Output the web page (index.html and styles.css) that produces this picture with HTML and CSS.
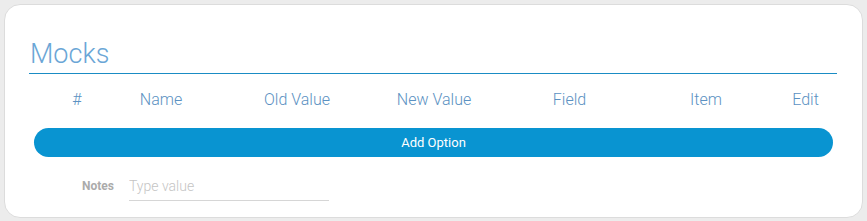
FILE: index.html
```html
<!DOCTYPE html>
<html lang="en">

<head>
    <meta charset="UTF-8">
    <meta name="viewport" content="width=device-width, initial-scale=1.0">
    <title>Mocks</title>
    <link rel="stylesheet" href="styles.css">
</head>

<body>
    <div class="card">
        <h1 class="title">Mocks</h1>
        <div class="table-head">
            <span>#</span>
            <span>Name</span>
            <span>Old Value</span>
            <span>New Value</span>
            <span>Field</span>
            <span>Item</span>
            <span class="edit">Edit</span>
        </div>
        <button class="add-btn">Add Option</button>
        <div class="notes">
            <label for="notes">Notes</label>
            <input type="text" id="notes" placeholder="Type value">
        </div>
    </div>
</body>

</html>
```

FILE: styles.css
```css
* {
    padding: 0;
    margin: 0;
    box-sizing: border-box;
}

body {
    background: #ececec;
    padding: 4px;
    font-family: Roboto, "Liberation Sans", sans-serif;
}

.card {
    height: 214px;
    background: white;
    border: 1px solid #dcdcdc;
    border-radius: 16px;
    padding: 32px 25px 14px 24px;
}

.title {
    font-size: 27px;
    font-weight: 300;
    line-height: 34px;
    color: #6ba6d6;
    padding-left: 1px;
    padding-bottom: 2px;
    border-bottom: 1px solid #1a8cc4;
}

.table-head {
    display: grid;
    grid-template-columns: 96px 72px 200px 74px 197px 76px 1fr;
    margin-top: 6px;
    height: 40px;
    line-height: 40px;
    font-size: 16px;
    font-weight: 300;
    color: #5b91c2;
    text-align: center;
    white-space: nowrap;
}

.table-head span {
    display: flex;
    justify-content: center;
}

.table-head .edit {
    padding-left: 30px;
}

.add-btn {
    display: block;
    width: calc(100% - 9px);
    margin: 8px 0 0 5px;
    height: 29px;
    border: none;
    border-radius: 15px;
    background: #0994d1;
    color: white;
    font-family: Roboto, "Liberation Sans", sans-serif;
    font-size: 13px;
    cursor: pointer;
}

.notes {
    display: flex;
    align-items: center;
    margin-top: 14px;
    height: 30px;
}

.notes label {
    width: 100px;
    padding-right: 15px;
    text-align: right;
    font-size: 12px;
    font-weight: bold;
    color: #ababab;
}

.notes input {
    width: 200px;
    height: 30px;
    border: none;
    border-bottom: 1px solid #d6d6d6;
    font-family: Roboto, "Liberation Sans", sans-serif;
    font-size: 14px;
    font-weight: 300;
    color: #555;
    outline: none;
}

.notes input::placeholder {
    color: #c4c4c4;
}
```
